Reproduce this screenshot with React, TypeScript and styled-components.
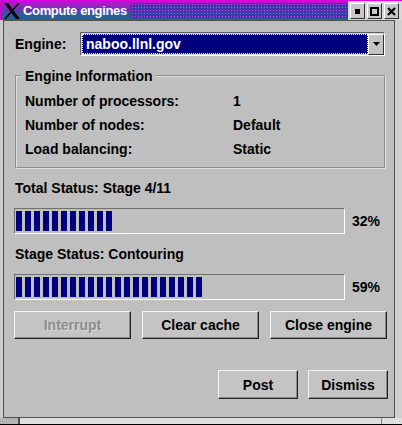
import React from "react";
import styled, { createGlobalStyle } from "styled-components";

const Global = createGlobalStyle`
  html, body { margin: 0; padding: 0; background: #c0c0c0; }
  * { box-sizing: border-box; }
`;

const Window = styled.div`
  width: 402px;
  height: 425px;
  display: flex;
  flex-direction: column;
  background: #c4c4c4;
  font-family: "Liberation Sans", Arial, sans-serif;
  font-weight: bold;
  color: #000;
  overflow: hidden;
`;

const TitleBar = styled.div`
  height: 20px;
  display: flex;
  align-items: stretch;
  background: linear-gradient(to bottom, #c010d0 0%, #a020c8 20%, #7030b0 45%, #305a9c 70%, #1e6490 100%);
  border-left: 2px solid #d000d0;
  border-top: 1px solid #e000e0;
`;

const XLogo = styled.div`
  width: 19px;
  display: flex;
  align-items: center;
  justify-content: center;
`;

const TitleText = styled.div`
  color: #fff;
  font-size: 13px;
  letter-spacing: -0.35px;
  font-weight: bold;
  line-height: 19px;
  padding-left: 2px;
  padding-right: 4px;
  white-space: nowrap;
`;

const Dots = styled.div`
  flex: 1;
  margin: 2px 0 2px 0;
  background-color: #3a3aa8;
  background-image: radial-gradient(circle, #ff30ff 0.8px, transparent 1px);
  background-size: 3px 3px;
`;

const TitleButtons = styled.div`
  display: flex;
  gap: 2px;
  padding: 1px 3px 0 2px;
  background: #d8d8d8;
  align-items: center;
`;

const TitleButton = styled.div`
  width: 15px;
  height: 16px;
  background: #c8c8c8;
  border-top: 1px solid #ffffff;
  border-left: 1px solid #ffffff;
  border-right: 1px solid #303030;
  border-bottom: 1px solid #303030;
  display: flex;
  align-items: center;
  justify-content: center;
`;

const Frame = styled.div`
  flex: 1;
  display: flex;
  flex-direction: column;
  border-left: 3px solid #cccccc;
  border-right: 7px solid #d0d0d0;
`;

const Content = styled.div`
  flex: 1;
  border: 1px solid #505050;
  background: #bfbfbf;
  padding: 11px 6px 0 10px;
  display: flex;
  flex-direction: column;
`;

const BottomStrip = styled.div`
  height: 7px;
  display: flex;
  border-bottom: 1px solid #000;
  margin-right: -7px;
  margin-left: -3px;
`;

const StripPart = styled.div<{ $w?: number; $dark?: boolean }>`
  ${(p) => (p.$w ? `width: ${p.$w}px;` : "flex: 1;")}
  background: ${(p) => (p.$dark ? "#b4b4b4" : "#dedede")};
  border-left: ${(p) => (p.$w && !p.$dark ? "1px solid #808080" : "none")};
  border-right: ${(p) => (p.$dark ? "2px solid #505050" : "none")};
`;

const EngineRow = styled.div`
  display: flex;
  align-items: center;
  height: 24px;
`;

const Label = styled.span`
  font-size: 14px;
  white-space: nowrap;
`;

const EngineLabel = styled(Label)`
  width: 66px;
  padding-left: 1px;
`;

const Combo = styled.div`
  width: 305px;
  height: 24px;
  display: flex;
  border-top: 1px solid #606060;
  border-left: 1px solid #606060;
  border-right: 1px solid #ffffff;
  border-bottom: 1px solid #ffffff;
  background: #d0d0d0;
`;

const ComboText = styled.div`
  flex: 1;
  background: #00007f;
  color: #fff;
  font-size: 14px;
  line-height: 20px;
  padding-left: 4px;
  margin: 1px 0 1px 1px;
  outline: 1px dotted #ffffff;
  outline-offset: -1px;
`;

const ComboButton = styled.div`
  width: 16px;
  margin: 1px 0 0 0;
  background: #c4c4c4;
  border-top: 1px solid #ffffff;
  border-left: 1px solid #ffffff;
  border-right: 1px solid #303030;
  border-bottom: 1px solid #303030;
  display: flex;
  align-items: center;
  justify-content: center;
`;

const Group = styled.fieldset`
  margin: 12px 0 0 1px;
  width: 371px;
  height: 101px;
  padding: 5px 0 0 8px;
  border: 2px groove #e0e0e0;
  display: flex;
  flex-direction: column;
`;

const Legend = styled.legend`
  font-size: 14px;
  padding: 0 3px 0 4px;
  margin-left: -4px;
  line-height: 16px;
`;

const InfoRow = styled.div`
  display: flex;
  align-items: center;
  height: 24px;
`;

const InfoKey = styled(Label)`
  width: 208px;
`;

const StatusLabel = styled(Label)<{ $mt: number }>`
  display: block;
  line-height: 16px;
  padding-left: 1px;
  margin-top: ${(p) => p.$mt}px;
`;

const BarRow = styled.div<{ $mt: number }>`
  display: flex;
  align-items: center;
  margin-top: ${(p) => p.$mt}px;
`;

const Bar = styled.div`
  width: 331px;
  height: 26px;
  border-top: 1px solid #707070;
  border-left: 1px solid #707070;
  border-right: 1px solid #ffffff;
  border-bottom: 1px solid #ffffff;
  padding: 2px 1px;
  display: flex;
  gap: 3px;
  background: #c0c0c0;
`;

const Block = styled.div`
  width: 6px;
  height: 20px;
  background: #00007f;
`;

const Pct = styled(Label)`
  margin-left: 7px;
`;

const ButtonRow = styled.div<{ $mt: number; $justify?: string }>`
  display: flex;
  gap: ${(p) => (p.$justify ? 10 : 11)}px;
  margin-top: ${(p) => p.$mt}px;
  justify-content: ${(p) => p.$justify ?? "flex-start"};
`;

const Button = styled.div<{ $w: number; $h: number; $disabled?: boolean }>`
  width: ${(p) => p.$w}px;
  height: ${(p) => p.$h}px;
  display: flex;
  align-items: center;
  justify-content: center;
  font-size: 14px;
  background: #c4c4c4;
  border-top: 1px solid #f4f4f4;
  border-left: 1px solid #f4f4f4;
  border-right: 1px solid #202020;
  border-bottom: 1px solid #202020;
  box-shadow: inset -1px -1px 0 #8a8a8a;
  color: ${(p) => (p.$disabled ? "#8c8c8c" : "#000")};
  text-shadow: ${(p) => (p.$disabled ? "1px 1px 0 #dcdcdc" : "none")};
`;

const bars = [
  { label: "Total Status: Stage 4/11", pct: 32, mt: 11 },
  { label: "Stage Status: Contouring", pct: 59, mt: 12 },
];

const info = [
  ["Number of processors:", "1"],
  ["Number of nodes:", "Default"],
  ["Load balancing:", "Static"],
];

export default function App() {
  return (
    <>
      <Global />
      <Window>
        <TitleBar>
          <XLogo>
            <svg width="16" height="16" viewBox="0 0 16 16">
              <polygon points="0,0 4,0 16,16 12,16" fill="#000" />
              <polygon points="14,0 16,0 2,16 0,16" fill="#000" />
            </svg>
          </XLogo>
          <TitleText>Compute engines</TitleText>
          <Dots />
          <TitleButtons>
            <TitleButton>
              <svg width="5" height="5"><rect width="5" height="5" fill="#000" /></svg>
            </TitleButton>
            <TitleButton>
              <svg width="9" height="9"><rect x="1" y="1" width="7" height="7" fill="none" stroke="#000" strokeWidth="2" /></svg>
            </TitleButton>
            <TitleButton>
              <svg width="9" height="9">
                <path d="M1 1 L8 8 M8 1 L1 8" stroke="#000" strokeWidth="2.2" />
              </svg>
            </TitleButton>
          </TitleButtons>
        </TitleBar>
        <Frame>
          <Content>
            <EngineRow>
              <EngineLabel>Engine:</EngineLabel>
              <Combo>
                <ComboText>naboo.llnl.gov</ComboText>
                <ComboButton>
                  <svg width="7" height="5"><polygon points="0,0 7,0 3.5,4" fill="#000" /></svg>
                </ComboButton>
              </Combo>
            </EngineRow>
            <Group>
              <Legend>Engine Information</Legend>
              {info.map(([k, v]) => (
                <InfoRow key={k}>
                  <InfoKey>{k}</InfoKey>
                  <Label>{v}</Label>
                </InfoRow>
              ))}
            </Group>
            {bars.map((b) => (
              <React.Fragment key={b.label}>
                <StatusLabel $mt={b.mt}>{b.label}</StatusLabel>
                <BarRow $mt={12}>
                  <Bar>
                    {Array.from({ length: Math.floor((b.pct / 100) * 329 / 9) }).map((_, i) => (
                      <Block key={i} />
                    ))}
                  </Bar>
                  <Pct>{b.pct}%</Pct>
                </BarRow>
              </React.Fragment>
            ))}
            <ButtonRow $mt={11}>
              <Button $w={117} $h={28} $disabled>Interrupt</Button>
              <Button $w={117} $h={28}>Clear cache</Button>
              <Button $w={117} $h={28}>Close engine</Button>
            </ButtonRow>
            <ButtonRow $mt={31} $justify="flex-end">
              <Button $w={80} $h={29}>Post</Button>
              <Button $w={80} $h={29}>Dismiss</Button>
            </ButtonRow>
          </Content>
          <BottomStrip>
            <StripPart $w={20} $dark />
            <StripPart />
            <StripPart $w={21} />
          </BottomStrip>
        </Frame>
      </Window>
    </>
  );
}
